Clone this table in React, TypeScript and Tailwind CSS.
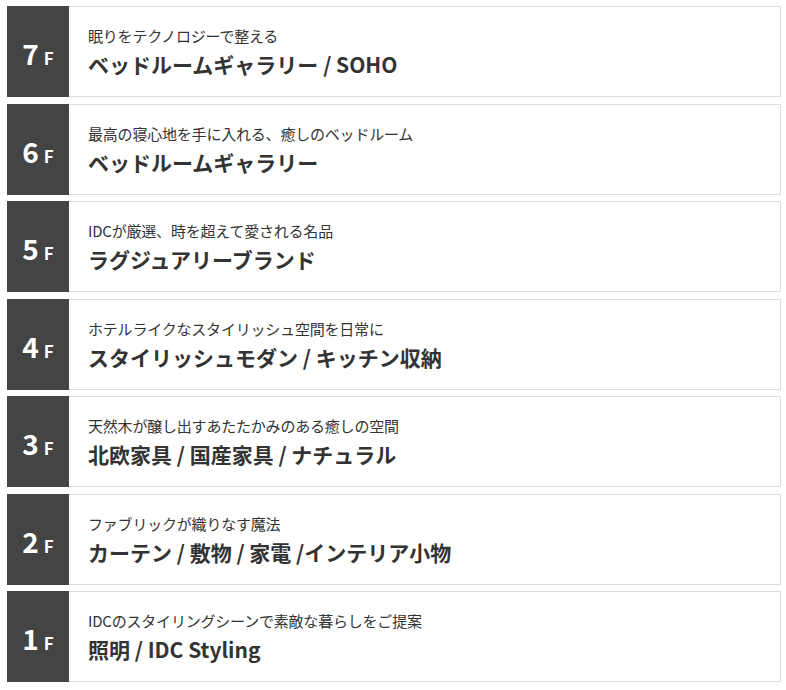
const floors = [
  { n: '7', sub: '眠りをテクノロジーで整える', title: 'ベッドルームギャラリー / SOHO' },
  { n: '6', sub: '最高の寝心地を手に入れる、癒しのベッドルーム', title: 'ベッドルームギャラリー' },
  { n: '5', sub: 'IDCが厳選、時を超えて愛される名品', title: 'ラグジュアリーブランド' },
  { n: '4', sub: 'ホテルライクなスタイリッシュ空間を日常に', title: 'スタイリッシュモダン / キッチン収納' },
  { n: '3', sub: '天然木が醸し出すあたたかみのある癒しの空間', title: '北欧家具 / 国産家具 / ナチュラル' },
  { n: '2', sub: 'ファブリックが織りなす魔法', title: 'カーテン / 敷物 / 家電 /インテリア小物' },
  { n: '1', sub: 'IDCのスタイリングシーンで素敵な暮らしをご提案', title: '照明 / IDC Styling' },
]

export default function App() {
  return (
    <div
      className="w-[786px] h-[690px] bg-white pt-[6px] pl-[7px] pr-[5px] flex flex-col gap-[6.5px]"
      style={{ fontFamily: '"Noto Sans CJK JP", "Noto Sans", sans-serif' }}
    >
      {floors.map(f => (
        <div key={f.n} className="flex h-[91px] border border-[#dddddd] bg-white">
          <div className="w-[62px] -my-px -ml-px bg-[#444444] text-white flex items-baseline justify-center gap-[5px] pt-[33px] shrink-0">
            <span className="text-[28px] font-bold leading-none">{f.n}</span>
            <span className="text-[17px] font-bold leading-none">F</span>
          </div>
          <div className="flex flex-col pl-[19px] pt-[17px] text-[#333333]">
            <p className="text-[15px] leading-[24px] tracking-[-0.2px]">{f.sub}</p>
            <p className="text-[21px] font-bold leading-[32px]">{f.title}</p>
          </div>
        </div>
      ))}
    </div>
  )
}
